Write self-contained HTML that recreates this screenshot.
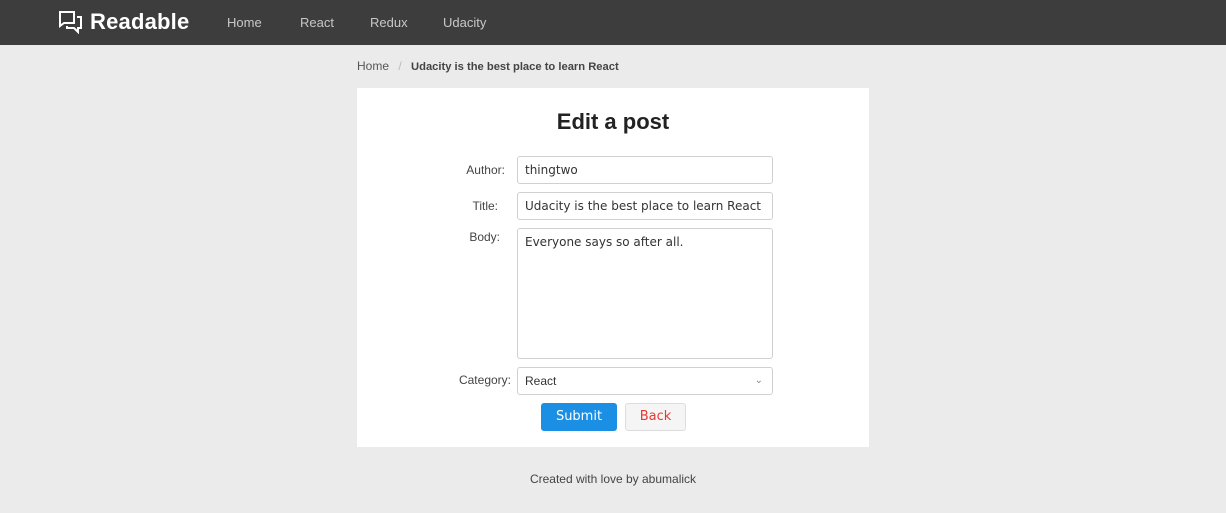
<!DOCTYPE html>
<html><head><style>
body{margin:0;background:#ebebeb;font-family:"Liberation Sans",sans-serif;width:1226px;height:513px;position:relative;overflow:hidden}
.nav{position:absolute;left:0;top:0;width:1226px;height:45px;background:#3d3d3d}
.abs{position:absolute;white-space:nowrap}
.nl{color:#c8c8c8;font-size:13px;top:15px}
.card{position:absolute;left:357px;top:88px;width:512px;height:359px;background:#fff}
.lab{position:absolute;font-size:12px;color:#444;text-align:right;width:60px}
.inp{position:absolute;left:517px;width:256px;border:1px solid #d0d0d0;border-radius:3px;background:#fff;font-family:"DejaVu Sans",sans-serif;font-size:12px;color:#333;box-sizing:border-box;padding-left:7px}
</style></head><body>
<div class="nav">
<svg class="abs" style="left:58px;top:11px" width="24" height="23" viewBox="0 0 24 23" fill="none" stroke="#fff" stroke-width="2"><path d="M1 1h15v11H6l-4 3V1z"/><path d="M19 6h4v11h-3v4l-4-4H9v-2"/></svg>
<div class="abs" style="left:90px;top:9px;color:#fff;font-size:22px;font-weight:bold;letter-spacing:0.2px">Readable</div>
<div class="abs nl" style="left:227px">Home</div>
<div class="abs nl" style="left:300px">React</div>
<div class="abs nl" style="left:370px">Redux</div>
<div class="abs nl" style="left:443px">Udacity</div>
</div>
<div class="abs" style="left:357px;top:59px;font-size:12px;color:#555">Home <span style="color:#bbb;margin:0 6px">/</span> <b style="color:#444;font-size:11.2px">Udacity is the best place to learn React</b></div>
<div class="card"></div>
<div class="abs" style="left:357px;width:512px;text-align:center;top:109px;font-size:22px;font-weight:bold;color:#222">Edit a post</div>
<div class="lab" style="left:445px;top:163px">Author:</div>
<div class="lab" style="left:438px;top:199px">Title:</div>
<div class="lab" style="left:440px;top:230px">Body:</div>
<div class="lab" style="left:451px;top:373px">Category:</div>
<div class="inp" style="top:156px;height:28px;line-height:26px">thingtwo</div>
<div class="inp" style="top:192px;height:28px;line-height:26px">Udacity is the best place to learn React</div>
<div class="inp" style="top:228px;height:131px;padding-top:6px">Everyone says so after all.</div>
<div class="inp" style="top:367px;height:28px;line-height:26px;font-family:'Liberation Sans',sans-serif">React<span style="position:absolute;right:9px;color:#888;font-size:10px">&#8964;</span></div>
<div class="abs" style="left:541px;top:403px;width:76px;height:28px;background:#1a8fe3;border-radius:3px;color:#fff;font-family:'DejaVu Sans',sans-serif;font-size:13px;text-align:center;line-height:28px">Submit</div>
<div class="abs" style="left:625px;top:403px;width:59px;height:26px;background:#f5f5f5;border:1px solid #ddd;border-radius:3px;color:#e8392f;font-family:'DejaVu Sans',sans-serif;font-size:13px;text-align:center;line-height:26px">Back</div>
<div class="abs" style="left:0;width:1226px;text-align:center;top:472px;font-size:12px;color:#444">Created with love by abumalick</div>
</body></html>
